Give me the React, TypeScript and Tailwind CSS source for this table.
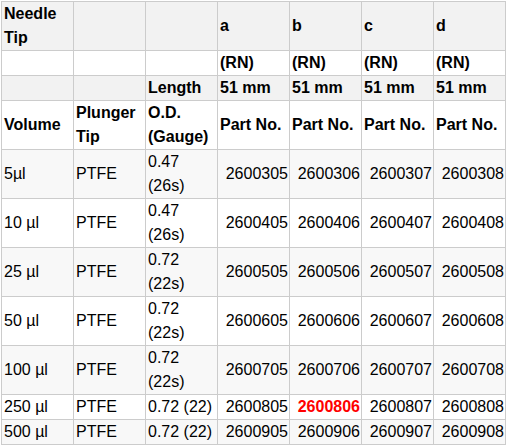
const parts = [
  { vol: "5µl", od: ["0.47", "(26s)"], base: "26003" },
  { vol: "10 µl", od: ["0.47", "(26s)"], base: "26004" },
  { vol: "25 µl", od: ["0.72", "(22s)"], base: "26005" },
  { vol: "50 µl", od: ["0.72", "(22s)"], base: "26006" },
  { vol: "100 µl", od: ["0.72", "(22s)"], base: "26007" },
  { vol: "250 µl", od: ["0.72 (22)"], base: "26008" },
  { vol: "500 µl", od: ["0.72 (22)"], base: "26009" },
];

const cell = "border border-[#cccccc] px-[2px] py-0 align-middle";
const head = `${cell} font-bold text-left`;

export default function App() {
  return (
    <div className="pt-[1px] pl-[1px] bg-white min-h-screen">
      <table
        className="table-fixed border-collapse text-[16px] leading-[24px] text-black"
        style={{ fontFamily: '"Liberation Sans", Arial, sans-serif', width: 505 }}
      >
        <colgroup>
          {Array.from({ length: 7 }).map((_, i) => (
            <col key={i} className="w-[72px]" />
          ))}
        </colgroup>
        <tbody>
          <tr className="bg-[#f2f2f2]">
            <td className={head}>
              Needle
              <br />
              Tip
            </td>
            <td className={head}></td>
            <td className={head}></td>
            <td className={head}>a</td>
            <td className={head}>b</td>
            <td className={head}>c</td>
            <td className={head}>d</td>
          </tr>
          <tr className="bg-white">
            <td className={head}></td>
            <td className={head}></td>
            <td className={head}></td>
            <td className={head}>(RN)</td>
            <td className={head}>(RN)</td>
            <td className={head}>(RN)</td>
            <td className={head}>(RN)</td>
          </tr>
          <tr className="bg-[#f2f2f2]">
            <td className={head}></td>
            <td className={head}></td>
            <td className={head}>Length</td>
            <td className={head}>51 mm</td>
            <td className={head}>51 mm</td>
            <td className={head}>51 mm</td>
            <td className={head}>51 mm</td>
          </tr>
          <tr className="bg-white">
            <td className={head}>Volume</td>
            <td className={head}>
              Plunger
              <br />
              Tip
            </td>
            <td className={head}>
              O.D.
              <br />
              (Gauge)
            </td>
            <td className={head}>Part No.</td>
            <td className={head}>Part No.</td>
            <td className={head}>Part No.</td>
            <td className={head}>Part No.</td>
          </tr>
          {parts.map((p, i) => (
            <tr key={p.vol} className={i % 2 === 0 ? "bg-[#f8f8f8]" : "bg-white"}>
              <td className={cell}>{p.vol}</td>
              <td className={cell}>PTFE</td>
              <td className={cell}>
                {p.od.map((t, j) => (
                  <div key={j}>{t}</div>
                ))}
              </td>
              {["05", "06", "07", "08"].map((s) => {
                const no = p.base + s;
                const hot = no === "2600806";
                return (
                  <td
                    key={s}
                    className={`${cell} text-right !pr-[1px] ${hot ? "font-bold text-[#ff0000]" : ""}`}
                  >
                    {no}
                  </td>
                );
              })}
            </tr>
          ))}
        </tbody>
      </table>
    </div>
  );
}
